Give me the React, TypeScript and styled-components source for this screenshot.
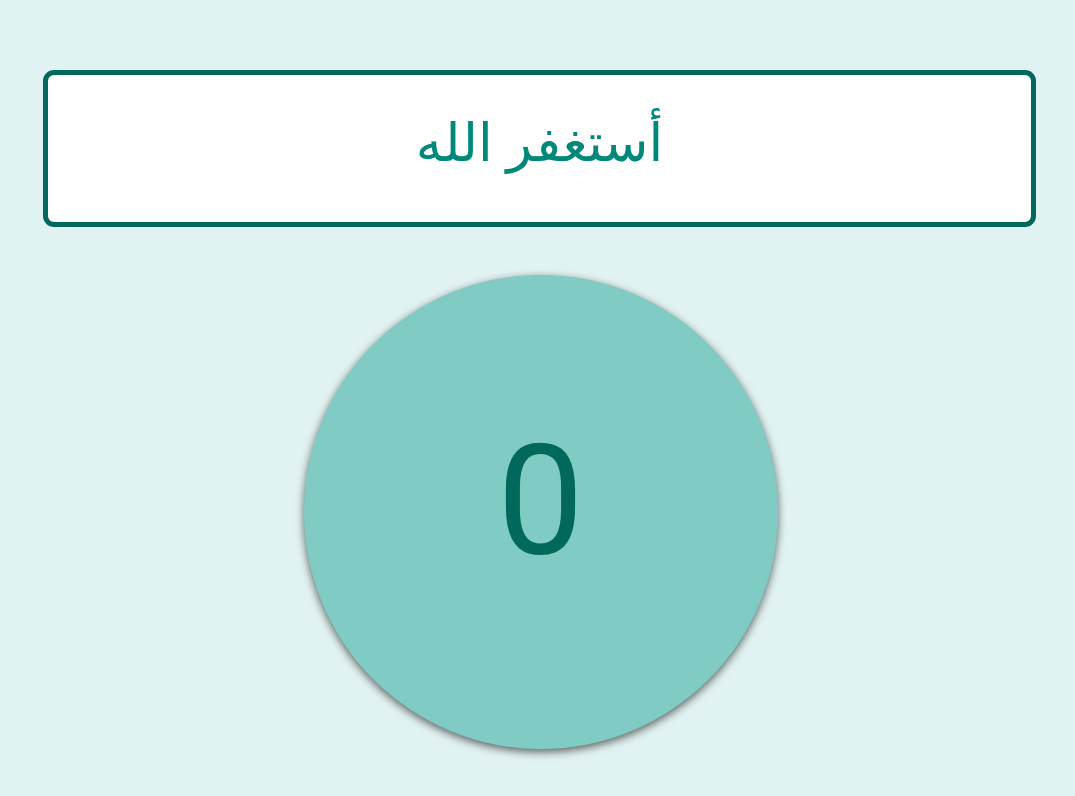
import React from "react";
import styled, { createGlobalStyle } from "styled-components";

const Global = createGlobalStyle`
  html, body { margin: 0; padding: 0; background: #e0f2f1; }
  body { font-family: Roboto, "Noto Sans", "DejaVu Sans", sans-serif; }
`;

const Page = styled.div`
  min-height: 796px;
  box-sizing: border-box;
  padding: 70px 39px 0 43px;
  display: flex;
  flex-direction: column;
  align-items: center;
`;

const PhraseBox = styled.div`
  width: 100%;
  height: 157px;
  box-sizing: border-box;
  background: #ffffff;
  border: 5px solid #00695c;
  border-radius: 11px;
  display: flex;
  align-items: center;
  justify-content: center;
`;

const Phrase = styled.div`
  direction: rtl;
  color: #00897b;
  font-size: 53px;
  font-family: "Noto Sans", "DejaVu Sans", sans-serif;
  line-height: 1;
  margin-bottom: 16px;
`;

const Counter = styled.button`
  margin-top: 48px;
  margin-left: 2px;
  width: 474px;
  height: 474px;
  border-radius: 50%;
  border: none;
  background: #80cbc4;
  box-shadow: 0 3px 9px rgba(0, 0, 0, 0.6);
  display: flex;
  align-items: center;
  justify-content: center;
  padding: 0;
  cursor: pointer;
`;

const Count = styled.span`
  color: #00695c;
  font-family: Roboto, "Noto Sans", sans-serif;
  font-size: 154px;
  line-height: 1;
  margin-top: -20px;
`;

export default function App() {
  return (
    <>
      <Global />
      <Page>
        <PhraseBox>
          <Phrase>أستغفر الله</Phrase>
        </PhraseBox>
        <Counter>
          <Count>0</Count>
        </Counter>
      </Page>
    </>
  );
}
